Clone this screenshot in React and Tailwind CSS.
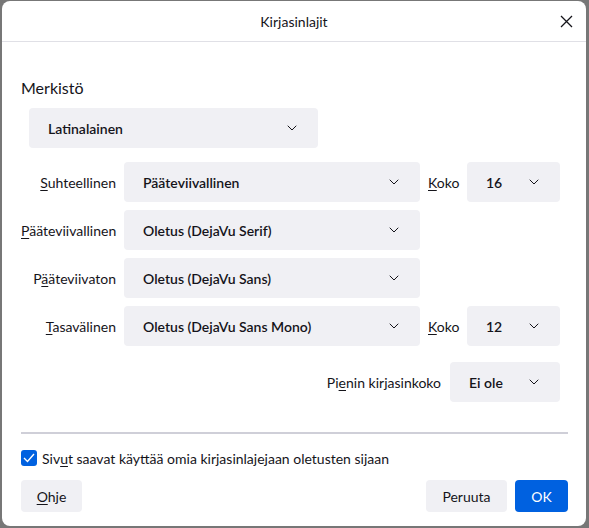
import React from 'react'

const font = { fontFamily: 'Lato, "Noto Sans", sans-serif' }

function Chevron() {
  return (
    <svg width="10" height="6" viewBox="0 0 10 6" fill="none" className="shrink-0">
      <path d="M1 1l4 4 4-4" stroke="#15141a" strokeWidth="1" strokeLinecap="round" strokeLinejoin="round" />
    </svg>
  )
}

function Select({ value, className = '' }) {
  return (
    <div className={`h-10 rounded-[4px] bg-[#f0f0f4] flex items-center justify-between pl-[19px] pr-[21px] text-[14px] font-semibold text-[#15141a] ${className}`}>
      <span>{value}</span>
      <Chevron />
    </div>
  )
}

function Label({ pre, u, post, className = '' }) {
  return (
    <span className={`text-[14px] text-[#15141a] ${className}`}>
      {pre}<span className="underline underline-offset-2">{u}</span>{post}
    </span>
  )
}

function FontRow({ label, value, size }) {
  return (
    <div className="flex items-center h-10">
      <div className="w-[95px] text-right shrink-0">{label}</div>
      <Select value={value} className="ml-[8px] w-[296px]" />
      {size && (
        <>
          <Label pre="" u="K" post="oko" className="ml-[8px] w-[31px]" />
          <Select value={size} className="ml-[8px] w-[93px]" />
        </>
      )}
    </div>
  )
}

export default function App() {
  return (
    <div className="w-[589px] h-[528px] bg-[#777777] pl-[2px] pr-[3px] pt-[1px] pb-[2px]" style={font}>
      <div className="w-full h-full bg-white rounded-[8px] flex flex-col">
        <div className="h-[41px] relative flex items-center justify-center border-b border-[#e0e0e6] shrink-0">
          <span className="text-[14px] text-[#15141a]">Kirjasinlajit</span>
          <svg className="absolute right-[13px] top-[14px]" width="13" height="13" viewBox="0 0 13 13">
            <path d="M1 1l11 11M12 1L1 12" stroke="#15141a" strokeWidth="1.3" />
          </svg>
        </div>

        <div className="pl-[19px] pr-[18px] pt-[36px]">
          <div className="text-[16px] text-[#15141a] leading-[20px]">Merkistö</div>
          <Select value="Latinalainen" className="mt-[10px] ml-[8px] w-[289px]" />

          <div className="mt-[14px] flex flex-col gap-[8px]">
            <FontRow label={<Label u="S" post="uhteellinen" />} value="Pääteviivallinen" size="16" />
            <FontRow label={<Label u="P" post="ääteviivallinen" />} value="Oletus (DejaVu Serif)" />
            <FontRow label={<Label pre="P" u="ä" post="äteviivaton" />} value="Oletus (DejaVu Sans)" />
            <FontRow label={<Label u="T" post="asavälinen" />} value="Oletus (DejaVu Sans Mono)" size="12" />
          </div>

          <div className="mt-[16px] flex items-center justify-end pr-[8px]">
            <Label pre="Pi" u="e" post="nin kirjasinkoko" />
            <Select value="Ei ole" className="ml-[9px] w-[110px]" />
          </div>

          <div className="mt-[30px] h-[2px] bg-[#cfcfd8]" />

          <div className="mt-[14px] flex items-center h-5">
            <div className="w-4 h-4 rounded-[3px] bg-[#0061e0] flex items-center justify-center">
              <svg width="12" height="10" viewBox="0 0 12 10">
                <path d="M1 5l3.5 3.5L11 1" stroke="white" strokeWidth="1.4" fill="none" />
              </svg>
            </div>
            <Label pre="Siv" u="u" post="t saavat käyttää omia kirjasinlajejaan oletusten sijaan" className="ml-[5px]" />
          </div>

          <div className="mt-[12px] flex items-center">
            <button className="h-8 w-[61px] rounded-[4px] bg-[#f0f0f4] text-[14px] text-[#15141a]">
              <span className="underline underline-offset-2">O</span>hje
            </button>
            <div className="flex-1" />
            <button className="h-8 w-[81px] rounded-[4px] bg-[#f0f0f4] text-[14px] text-[#15141a]">Peruuta</button>
            <button className="ml-[8px] h-8 w-[53px] rounded-[4px] bg-[#0061e0] text-[14px] text-white">OK</button>
          </div>
        </div>
      </div>
    </div>
  )
}
